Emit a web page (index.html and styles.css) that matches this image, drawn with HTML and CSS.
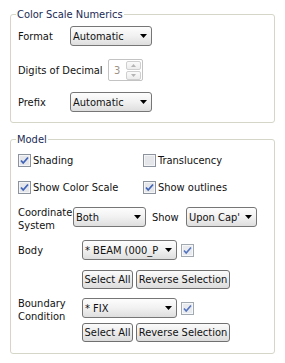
FILE: index.html
```html
<!DOCTYPE html>
<html lang="en">
<head>
    <meta charset="UTF-8">
    <meta name="viewport" content="width=device-width, initial-scale=1.0">
    <title>Color Scale</title>
    <link rel="stylesheet" href="styles.css">
</head>
<body>

    <fieldset class="group numerics">
        <legend>Color Scale Numerics</legend>

        <div class="row">
            <span class="lbl lbl-format">Format</span>
            <div class="combo combo-auto">
                <span>Automatic</span>
                <svg class="arrow" width="7" height="4" viewBox="0 0 7 4"><polygon points="0,0 7,0 3.5,4" fill="#000"/></svg>
            </div>
        </div>

        <div class="row row-digits">
            <span class="lbl lbl-digits">Digits of Decimal</span>
            <div class="spinner">
                <span class="spin-value">3</span>
                <div class="spin-btns">
                    <div class="spin-btn">
                        <svg width="5" height="3" viewBox="0 0 5 3"><polygon points="0,3 5,3 2.5,0" fill="#b5b5b5"/></svg>
                    </div>
                    <div class="spin-btn">
                        <svg width="5" height="3" viewBox="0 0 5 3"><polygon points="0,0 5,0 2.5,3" fill="#b5b5b5"/></svg>
                    </div>
                </div>
            </div>
        </div>

        <div class="row row-prefix">
            <span class="lbl lbl-format">Prefix</span>
            <div class="combo combo-auto">
                <span>Automatic</span>
                <svg class="arrow" width="7" height="4" viewBox="0 0 7 4"><polygon points="0,0 7,0 3.5,4" fill="#000"/></svg>
            </div>
        </div>
    </fieldset>

    <fieldset class="group model">
        <legend>Model</legend>

        <div class="checks first">
            <div class="check">
                <svg class="box" width="13" height="13" viewBox="0 0 13 13"><rect x="0.5" y="0.5" width="12" height="12" fill="#e4e6ea" stroke="#8c939c"/><rect x="1.5" y="1.5" width="10" height="10" fill="none" stroke="#f4f5f7"/><path d="M3 6.5 L5.2 9 L10 3.5" fill="none" stroke="#3f63b8" stroke-width="1.8"/></svg>
                <span>Shading</span>
            </div>
            <div class="check">
                <svg class="box" width="13" height="13" viewBox="0 0 13 13"><rect x="0.5" y="0.5" width="12" height="12" fill="#e4e6ea" stroke="#8c939c"/><rect x="1.5" y="1.5" width="10" height="10" fill="none" stroke="#f4f5f7"/></svg>
                <span>Translucency</span>
            </div>
        </div>

        <div class="checks">
            <div class="check">
                <svg class="box" width="13" height="13" viewBox="0 0 13 13"><rect x="0.5" y="0.5" width="12" height="12" fill="#e4e6ea" stroke="#8c939c"/><rect x="1.5" y="1.5" width="10" height="10" fill="none" stroke="#f4f5f7"/><path d="M3 6.5 L5.2 9 L10 3.5" fill="none" stroke="#3f63b8" stroke-width="1.8"/></svg>
                <span>Show Color Scale</span>
            </div>
            <div class="check">
                <svg class="box" width="13" height="13" viewBox="0 0 13 13"><rect x="0.5" y="0.5" width="12" height="12" fill="#e4e6ea" stroke="#8c939c"/><rect x="1.5" y="1.5" width="10" height="10" fill="none" stroke="#f4f5f7"/><path d="M3 6.5 L5.2 9 L10 3.5" fill="none" stroke="#3f63b8" stroke-width="1.8"/></svg>
                <span>Show outlines</span>
            </div>
        </div>

        <div class="row row-top row-coord">
            <span class="lbl lbl-coord">Coordinate System</span>
            <div class="combo combo-both">
                <span>Both</span>
                <svg class="arrow" width="7" height="4" viewBox="0 0 7 4"><polygon points="0,0 7,0 3.5,4" fill="#000"/></svg>
            </div>
            <span class="lbl lbl-show">Show</span>
            <div class="combo combo-upon">
                <span>Upon Cap'</span>
                <svg class="arrow" width="7" height="4" viewBox="0 0 7 4"><polygon points="0,0 7,0 3.5,4" fill="#000"/></svg>
            </div>
        </div>

        <div class="row row-body">
            <span class="lbl lbl-wide">Body</span>
            <div class="combo combo-sel">
                <span>* BEAM (000_P</span>
                <svg class="arrow" width="7" height="4" viewBox="0 0 7 4"><polygon points="0,0 7,0 3.5,4" fill="#000"/></svg>
            </div>
            <svg class="box box-side" width="13" height="13" viewBox="0 0 13 13"><rect x="0.5" y="0.5" width="12" height="12" fill="#e8eaee" stroke="#a3a9b1"/><rect x="1.5" y="1.5" width="10" height="10" fill="none" stroke="#f6f7f9"/><path d="M3 6.5 L5.2 9 L10 3.5" fill="none" stroke="#5474c0" stroke-width="1.6"/></svg>
        </div>

        <div class="buttons">
            <button class="btn btn-all">Select All</button>
            <button class="btn btn-rev">Reverse Selection</button>
        </div>

        <div class="row row-top row-boundary">
            <span class="lbl lbl-wide lbl-two">Boundary Condition</span>
            <div class="combo combo-sel">
                <span>* FIX</span>
                <svg class="arrow" width="7" height="4" viewBox="0 0 7 4"><polygon points="0,0 7,0 3.5,4" fill="#000"/></svg>
            </div>
            <svg class="box box-side box-mid" width="13" height="13" viewBox="0 0 13 13"><rect x="0.5" y="0.5" width="12" height="12" fill="#e8eaee" stroke="#a3a9b1"/><rect x="1.5" y="1.5" width="10" height="10" fill="none" stroke="#f6f7f9"/><path d="M3 6.5 L5.2 9 L10 3.5" fill="none" stroke="#5474c0" stroke-width="1.6"/></svg>
        </div>

        <div class="buttons buttons-last">
            <button class="btn btn-all">Select All</button>
            <button class="btn btn-rev">Reverse Selection</button>
        </div>
    </fieldset>

</body>
</html>
```

FILE: styles.css
```css
*{
    box-sizing: border-box;
}

body{
    margin: 0;
    padding: 8px 10px 0 10px;
    font-family: "DejaVu Sans Condensed", "DejaVu Sans", sans-serif;
    font-size: 11px;
    line-height: 13px;
    color: #111;
    background-color: #fff;
}

/* group boxes */
.group{
    margin: 0;
    border: 1px solid #d5d5c8;
    border-radius: 3px;
    padding: 5px 6px 10px 7px;
    min-width: 0;
}

.group legend{
    padding: 0 1px;
    margin-left: -2px;
    color: #1a2a55;
}

.model{
    margin-top: 10px;
    padding-bottom: 11px;
}

/* rows */
.row{
    display: flex;
    align-items: center;
}

/* two-line labels hang below the combo without pushing the next row */
.row-top{
    align-items: flex-start;
    height: 20px;
}

.row-digits{
    margin-top: 13px;
}

.row-prefix{
    margin-top: 11px;
}

.lbl{
    flex: none;
}

.lbl-format{
    width: 52px;
}

.lbl-digits{
    width: 90px;
}

.lbl-coord{
    width: 55px;
    margin-top: -1px;
}

.lbl-show{
    width: 34px;
    margin-left: 6px;
    align-self: center;
}

.lbl-wide{
    width: 64px;
}

.lbl-two{
    margin-top: -1px;
}

/* combo boxes */
.combo{
    flex: none;
    height: 20px;
    border: 1px solid #767676;
    border-radius: 3px;
    background: linear-gradient(#fdfdfd, #f1f1f1 50%, #dedede);
    display: flex;
    align-items: center;
    justify-content: space-between;
    padding: 0 4px 0 2px;
    white-space: nowrap;
    overflow: hidden;
}

.arrow{
    flex: none;
    display: block;
}

.combo-auto{
    width: 82px;
}

.combo-both{
    width: 73px;
}

.combo-upon{
    width: 71px;
}

.combo-sel{
    width: 95px;
}

/* spinner */
.spinner{
    width: 35px;
    height: 22px;
    border: 1px solid #c3c3c3;
    border-radius: 2px;
    display: flex;
    align-items: center;
    padding: 1px;
}

.spin-value{
    flex: 1;
    padding-left: 4px;
    color: #a09284;
}

.spin-btns{
    display: flex;
    flex-direction: column;
    gap: 1px;
}

.spin-btn{
    width: 15px;
    height: 9px;
    border: 1px solid #cfcfcf;
    border-radius: 2px;
    background: linear-gradient(#fafafa, #ececec);
    display: flex;
    justify-content: center;
    align-items: center;
}

.spin-btn svg{
    display: block;
}

/* check boxes */
.checks{
    display: flex;
    margin-top: 14px;
}

.checks.first{
    margin-top: 3px;
}

.check{
    width: 135px;
    display: flex;
    align-items: center;
    gap: 2px;
    height: 13px;
}

.box{
    display: block;
    flex: none;
}

.row-coord{
    margin-top: 13px;
}

.row-body{
    margin-top: 13px;
}

.box-side{
    margin-left: 4px;
}

.box-mid{
    margin-top: 4px;
}

.row-boundary{
    margin-top: 9px;
}

/* buttons */
.buttons{
    display: flex;
    gap: 3px;
    margin-left: 64px;
    margin-top: 10px;
}

.buttons-last{
    margin-top: 5px;
}

.btn{
    height: 19px;
    padding: 0;
    border: 1px solid #707070;
    border-radius: 3px;
    background: linear-gradient(#fbfbfb, #ececec 50%, #dcdcdc);
    font-family: inherit;
    font-size: 11px;
    color: #111;
}

.btn-all{
    width: 51px;
}

.btn-rev{
    width: 94px;
}
```
